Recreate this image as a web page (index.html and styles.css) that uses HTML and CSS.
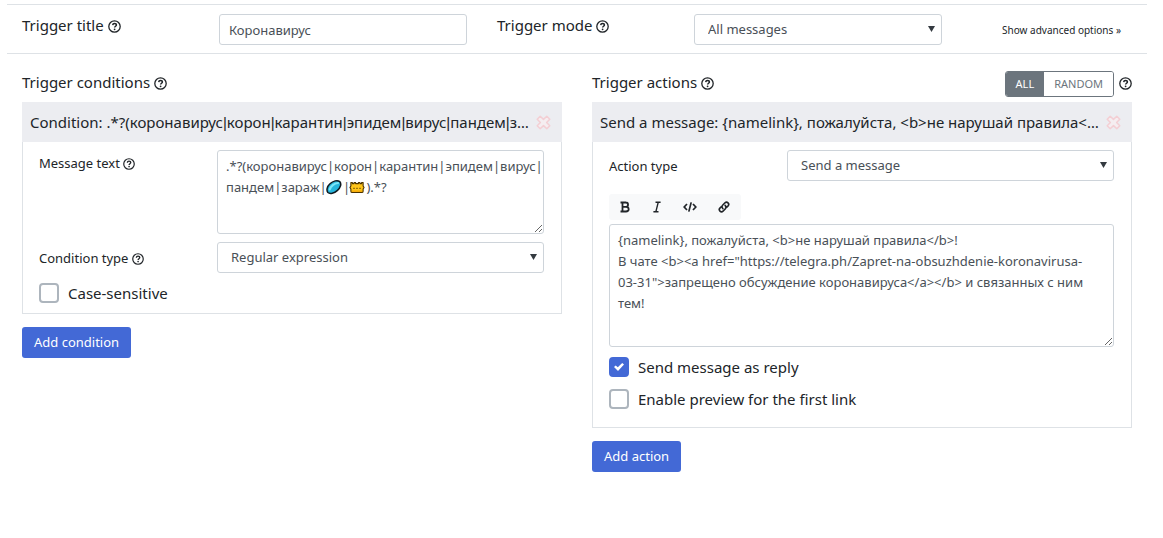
FILE: index.html
```html
<!DOCTYPE html>
<html lang="en">
<head>
<meta charset="utf-8">
<meta name="viewport" content="width=device-width, initial-scale=1">
<title>Trigger settings</title>
<link rel="stylesheet" href="styles.css">
</head>
<body>
<svg class="sprite" aria-hidden="true">
  <symbol id="help" viewBox="0 0 13 13">
    <circle cx="6.5" cy="6.5" r="5.7" fill="none" stroke="currentColor" stroke-width="1.3"/>
    <path d="M4.7 5.1C4.8 3.9 5.6 3.4 6.5 3.4C7.6 3.4 8.4 4.1 8.4 5C8.4 6.2 6.6 6.3 6.6 7.6" fill="none" stroke="currentColor" stroke-width="1.5"/>
    <circle cx="6.6" cy="9.3" r="0.9" fill="currentColor"/>
  </symbol>
  <symbol id="remove" viewBox="0 0 15 15">
    <path d="M4.2 1.2L7.5 4.4L10.8 1.2L13.8 4.2L10.6 7.5L13.8 10.8L10.8 13.8L7.5 10.6L4.2 13.8L1.2 10.8L4.4 7.5L1.2 4.2Z" fill="#f5eef1" stroke="#f3cfd4" stroke-width="1.5" stroke-linejoin="round"/>
  </symbol>
</svg>

<main class="page">
  <section class="topbar">
    <div class="pair">
      <label class="label" for="title">Trigger title <svg class="help"><use href="#help"/></svg></label>
      <input class="control" id="title" type="text" value="Коронавирус">
    </div>
    <div class="pair">
      <label class="label" for="mode">Trigger mode <svg class="help"><use href="#help"/></svg></label>
      <div class="select"><select class="control" id="mode"><option>All messages</option></select></div>
    </div>
    <a class="advanced" href="#">Show advanced options »</a>
  </section>

  <div class="columns">
    <section class="column">
      <div class="heading"><h2 class="title">Trigger conditions <svg class="help"><use href="#help"/></svg></h2></div>
      <div class="card">
        <div class="card-head">
          <span class="card-title">Condition: .*?(коронавирус<span class="bar">|</span>корон<span class="bar">|</span>карантин<span class="bar">|</span>эпидем<span class="bar">|</span>вирус<span class="bar">|</span>пандем<span class="bar">|</span>зараж<span class="bar">|</span>).*?</span>
          <button class="remove" type="button" aria-label="Remove condition"><svg><use href="#remove"/></svg></button>
        </div>
        <div class="card-body">
          <div class="field">
            <label class="small-label" for="text">Message text <svg class="help small"><use href="#help"/></svg></label>
            <div class="editor">
              <textarea class="control area pattern" id="text">.*?(коронавирус|корон|карантин|эпидем|вирус|пандем|зараж|&#8195;&#8197;|&#8195;&#8197;).*?</textarea>
              <svg class="emoji microbe" viewBox="0 0 17 16" aria-hidden="true">
                <path d="M2 13.8C.2 11.5 1 7.5 4.2 4.6C7.5 1.4 12.2.3 14.6 2.2C16.8 4.6 15.4 8.7 12.2 11.6C8.8 14.7 4.2 15.7 2 13.8Z" fill="#25b5dc" stroke="#101a20" stroke-width="1.6"/>
                <path d="M4 10.6C5 7.2 8.8 4 12.8 3.8" fill="none" stroke="#7be6f8" stroke-width="2.2" stroke-linecap="round"/>
              </svg>
              <svg class="emoji mask" viewBox="0 0 17 16" aria-hidden="true">
                <path d="M2 5V3.2H3.6V4.4H5.4V3.2H7V4.4H10V3.2H11.6V4.4H13.4V3.2H15V7L16 8.6L15 10.2V12.4C15 13.2 14.4 13.8 13.6 13.8H3.4C2.6 13.8 2 13.2 2 12.4V10.2L1 8.6L2 7Z" fill="#ffc61a" stroke="#4b3300" stroke-width="1.2" stroke-linejoin="round"/>
                <path d="M4.6 9.4H6M7.8 9.4H9.2M11 9.4H12.4" stroke="#6d4d00" stroke-width="1.2"/>
                <path d="M3 12.4H14" stroke="#f09d00" stroke-width="1"/>
              </svg>
            </div>
          </div>
          <div class="field">
            <label class="small-label centered" for="ctype">Condition type <svg class="help small"><use href="#help"/></svg></label>
            <div class="select"><select class="control" id="ctype"><option>Regular expression</option></select></div>
          </div>
          <label class="check"><input type="checkbox">Case-sensitive</label>
        </div>
      </div>
      <button class="primary" type="button">Add condition</button>
    </section>

    <section class="column">
      <div class="heading">
        <h2 class="title">Trigger actions <svg class="help"><use href="#help"/></svg></h2>
        <div class="toggle">
          <button class="active" type="button">ALL</button><button type="button">RANDOM</button>
        </div>
        <svg class="help"><use href="#help"/></svg>
      </div>
      <div class="card">
        <div class="card-head">
          <span class="card-title">Send a message: {namelink}, пожалуйста, &lt;b&gt;не нарушай правила&lt;/b&gt;!</span>
          <button class="remove" type="button" aria-label="Remove action"><svg><use href="#remove"/></svg></button>
        </div>
        <div class="card-body actions">
          <div class="field">
            <label class="small-label centered" for="atype">Action type</label>
            <div class="select"><select class="control" id="atype"><option>Send a message</option></select></div>
          </div>
          <div class="toolbar">
            <button type="button" aria-label="Bold"><svg viewBox="0 0 14 14"><path d="M2.5 2.5H8M2.5 11.5H8.3M4.5 2.5V11.5M4.5 6.8H8.2M7.8 2.5C10.8 2.5 10.8 6.8 7.8 6.8C11.6 6.8 11.6 11.5 8 11.5" fill="none" stroke="currentColor" stroke-width="1.8"/></svg></button>
            <button type="button" aria-label="Italic"><svg viewBox="0 0 14 14"><path d="M5.5 2.3H10.6M3.4 11.7H8.5M8.2 2.3L5.9 11.7" fill="none" stroke="currentColor" stroke-width="1.4"/></svg></button>
            <button type="button" aria-label="Code"><svg class="wide" viewBox="0 0 14 14"><path d="M4 4L1.2 7L4 10M10 4L12.8 7L10 10M8.2 2.4L5.8 11.6" fill="none" stroke="currentColor" stroke-width="1.7"/></svg></button>
            <button type="button" aria-label="Link"><svg class="wide" viewBox="0 0 14 14"><path d="M5.9 8.6C4.7 7.4 4.8 6 5.8 5L8 2.8C10 .9 13 3.9 11.1 5.9L9.8 7.2M8.1 5.4C9.3 6.6 9.2 8 8.2 9L6 11.2C4 13.1 1 10.1 2.9 8.1L4.2 6.8" fill="none" stroke="currentColor" stroke-width="1.6" stroke-linecap="round"/></svg></button>
          </div>
          <textarea class="control area tall" aria-label="Message">{namelink}, пожалуйста, &lt;b&gt;не нарушай правила&lt;/b&gt;!
В чате &lt;b&gt;&lt;a href="https://telegra.ph/Zapret-na-obsuzhdenie-koronavirusa-03-31"&gt;запрещено обсуждение коронавируса&lt;/a&gt;&lt;/b&gt; и связанных с ним тем!</textarea>
          <label class="check"><input type="checkbox" checked>Send message as reply</label>
          <label class="check"><input type="checkbox">Enable preview for the first link</label>
        </div>
      </div>
      <button class="primary" type="button">Add action</button>
    </section>
  </div>
</main>
</body>
</html>
```

FILE: styles.css
```css
* { box-sizing: border-box; }

body {
  margin: 0;
  background: #fff;
  color: #212529;
  font: 15px/24px "Noto Sans", "Open Sans", sans-serif;
}

button, input, select, textarea { font: inherit; margin: 0; }

.sprite { display: none; }

.page { padding: 4px 16px 0 7px; }

.topbar {
  display: grid;
  grid-template-columns: 89fr 89fr 32fr;
  gap: 30px;
  padding: 9px 15px 8px;
  border-top: 1px solid #dee2e6;
  border-bottom: 1px solid #dee2e6;
}

.pair {
  display: grid;
  grid-template-columns: 197fr 248fr;
}

.label { line-height: 22px; white-space: nowrap; }

.help {
  width: 13px;
  height: 13px;
  vertical-align: -2px;
  flex: none;
}

.help.small { width: 12px; height: 12px; }

.control {
  display: block;
  width: 100%;
  height: 31px;
  padding: 4px 9px;
  border: 1px solid #ced4da;
  border-radius: 3px;
  background: #fff;
  color: #495057;
  font-size: 13px;
  line-height: 21px;
}

.select { position: relative; }

.select .control {
  appearance: none;
  padding: 4px 24px 4px 13px;
}

.select::after {
  content: "";
  position: absolute;
  top: 12px;
  right: 7px;
  width: 7px;
  height: 6px;
  background: #343a40;
  clip-path: polygon(0 0, 100% 0, 50% 100%);
  pointer-events: none;
}

.advanced {
  padding: 4px 11px 3px 0;
  color: #212529;
  font-size: 10px;
  text-align: right;
  text-decoration: none;
  white-space: nowrap;
}

.columns {
  display: grid;
  grid-template-columns: 1fr 1fr;
  align-items: start;
  gap: 30px;
  padding: 16px 15px 0;
}

.column { min-width: 0; }

.heading {
  display: flex;
  align-items: flex-start;
  gap: 5px;
  height: 26px;
  margin-bottom: 6px;
}

.heading > .help { align-self: center; }

.title {
  flex: 1;
  margin: 0;
  font-size: 15px;
  font-weight: 400;
}

.toggle {
  display: flex;
  margin-top: 1px;
  border: 1px solid #6c757d;
  border-radius: 3px;
  overflow: hidden;
}

.toggle button {
  padding: 0 10px;
  border: 0;
  background: #fff;
  color: #6c757d;
  font-size: 11px;
  line-height: 24px;
}

.toggle .active { background: #6c757d; color: #fff; }

.card { border: 1px solid #dee2e6; }

.card-head {
  display: flex;
  align-items: center;
  gap: 6px;
  margin: -1px -1px 0;
  padding: 8px 11px 8px 8px;
  background: #ecedf1;
}

.card-title {
  flex: 1;
  overflow: hidden;
  text-overflow: ellipsis;
  white-space: nowrap;
}

.bar {
  font-family: "Liberation Sans", sans-serif;
  line-height: 1;
}

.remove {
  display: flex;
  padding: 0;
  border: 0;
  background: none;
}

.remove svg { width: 15px; height: 15px; }

.card-body {
  display: flex;
  flex-direction: column;
  gap: 8px;
  padding: 8px 17px 8px 16px;
}

.actions { padding-bottom: 16px; }

.field {
  display: grid;
  grid-template-columns: 178fr 327fr;
}

.small-label {
  font-size: 13px;
  line-height: 21px;
  padding-top: 3px;
}

.small-label.centered { padding-top: 6px; }

.editor { position: relative; }

.area {
  height: 84px;
  padding: 5px 14px 5px 8px;
  resize: both;
  overflow: hidden;
}

.pattern { padding-right: 0; }

.tall { height: 123px; }

.emoji {
  position: absolute;
  top: 29px;
  width: 16px;
  height: 16px;
}

.microbe { left: 109px; }
.mask { left: 132px; }

.toolbar {
  display: flex;
  align-self: flex-start;
  margin: 5px 0 -4px;
  border-radius: 3px;
  background: #f8f9fa;
}

.toolbar button {
  display: flex;
  padding: 6px 9px;
  border: 0;
  background: none;
  color: #212529;
}

.toolbar svg { width: 14px; height: 14px; }
.toolbar .wide { width: 16px; }

.check {
  display: flex;
  align-items: center;
  align-self: flex-start;
  gap: 9px;
}

.check input {
  appearance: none;
  display: grid;
  place-items: center;
  width: 20px;
  height: 20px;
  border: 2px solid #adb5bd;
  border-radius: 4px;
  background: #fff;
}

.check input:checked { border-color: #4369d6; background: #4369d6; }

.check input:checked::after {
  content: "";
  width: 10px;
  height: 8px;
  background: #fff;
  clip-path: polygon(0 50%, 17% 30%, 38% 52%, 82% 0, 100% 20%, 40% 100%);
}

.primary {
  height: 31px;
  margin-top: 13px;
  padding: 4px 12px;
  border: 0;
  border-radius: 3px;
  background: #4369d6;
  color: #fff;
  font-size: 13px;
  line-height: 21px;
}
```
